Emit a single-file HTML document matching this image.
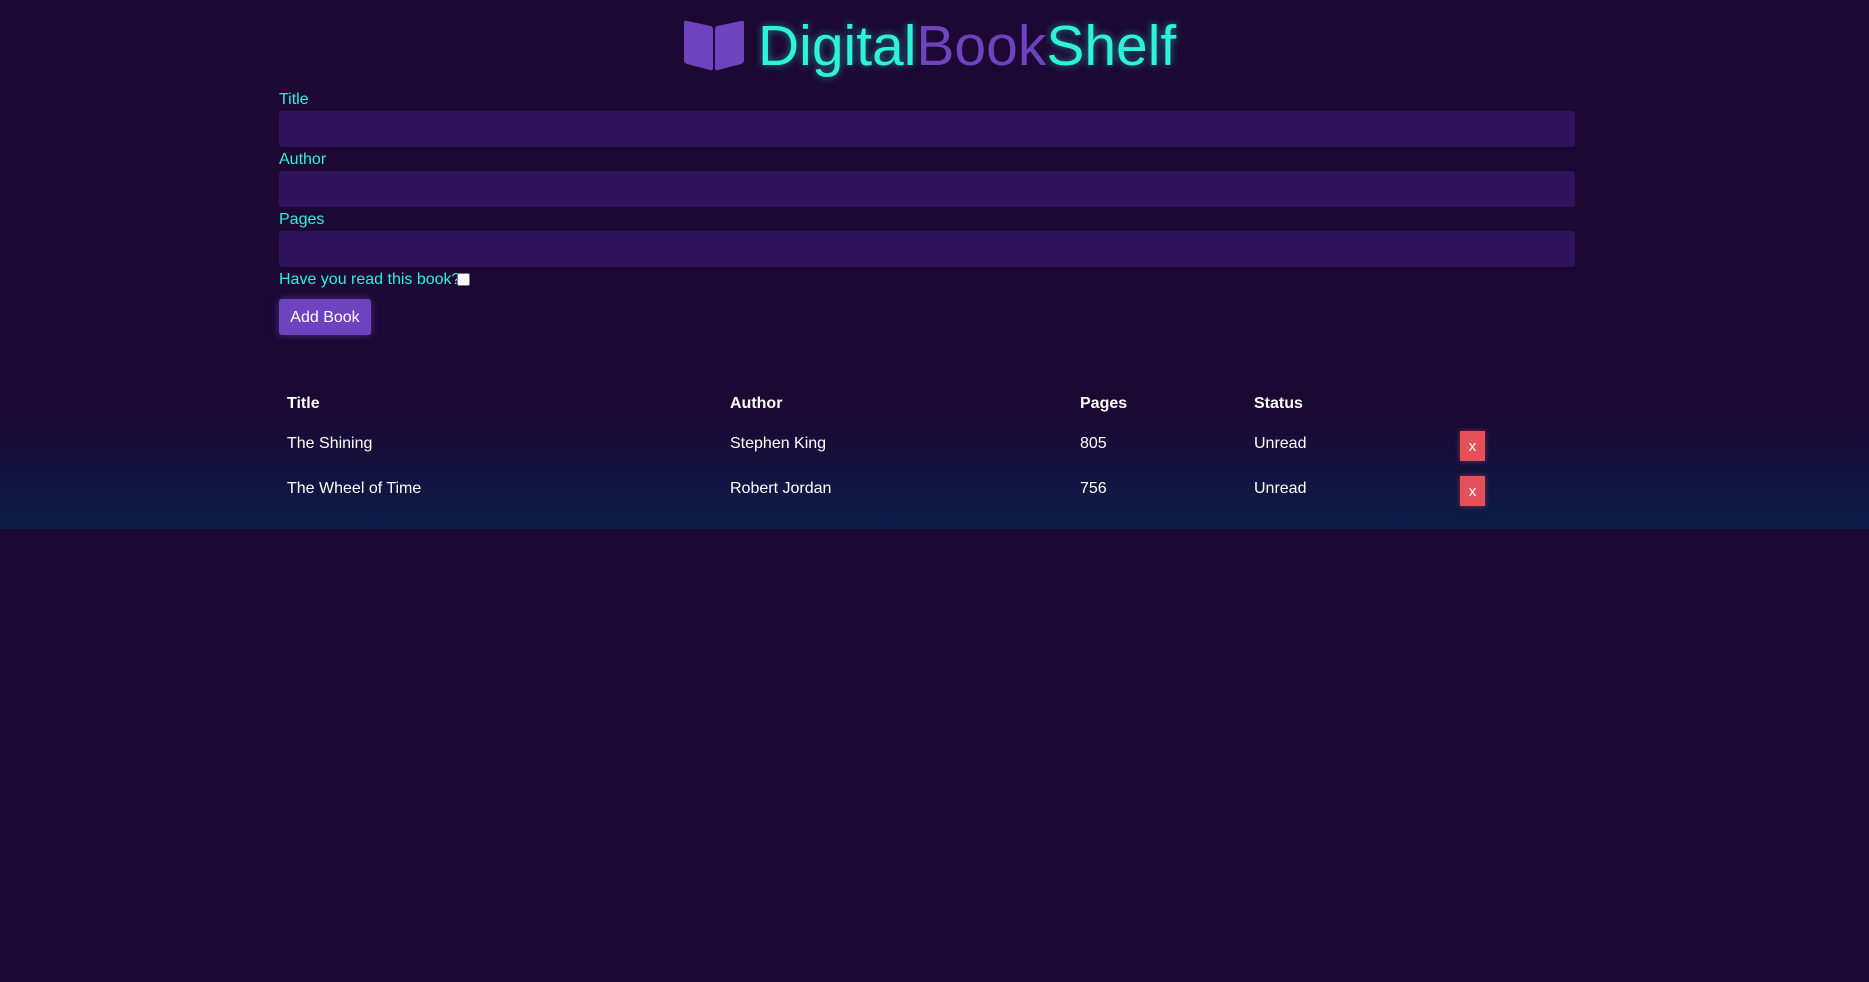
<!DOCTYPE html>
<html><head><meta charset="utf-8"><style>
html,body{margin:0;padding:0;width:1869px;height:982px;background:#1a0934;overflow:hidden;font-family:"Liberation Sans",sans-serif}
.top{position:absolute;left:0;top:0;width:1869px;height:529px;background:linear-gradient(to bottom,#1b0933 0px,#1b0933 415px,#0c1d4a 529px)}
.logo{position:absolute;left:682px;top:16px;height:60px;display:flex;align-items:center}
.logo span.t{font-size:57px;color:#2ef2da;text-shadow:0 0 8px rgba(46,242,218,.5);letter-spacing:0px}
.logo span.p{color:#6f43c0;text-shadow:none}
label{position:absolute;left:279px;color:#2ef2da;font-size:16px}
.inp{position:absolute;left:279px;width:1296px;height:36px;background:#30135d;border-radius:3px}
.btn{position:absolute;left:279px;top:299px;width:92px;height:36px;background:#6f43c0;border-radius:3px;color:#fff;font-size:16px;line-height:38px;text-align:center;box-shadow:0 0 8px rgba(111,67,192,.6)}
.cb{position:absolute;left:457px;top:273px;width:11px;height:11px;background:#fff;border:1px solid #777;border-radius:2px}
.c{position:absolute;color:#fff;font-size:16px}
.h{font-weight:bold}
.x{position:absolute;left:1460px;width:25px;height:30px;background:#e5515b;color:#fff;font-size:15px;text-align:center;line-height:31px;box-shadow:0 0 5px rgba(229,81,91,.5)}
</style></head><body>
<div class="top"></div>
<div class="logo">
<svg width="64" height="52" viewBox="0 0 64 52"><path d="M2 3 Q2 0 5 1 L29 6 Q31 7 31 9 L31 48 Q31 51 28 50 L5 44 Q2 43 2 40Z M33 9 Q33 7 35 6 L59 1 Q62 0 62 3 L62 40 Q62 43 59 44 L36 50 Q33 51 33 48Z" fill="#6f43c0"/></svg>
<span class="t" style="margin-left:12px">Digital<span class="p">Book</span>Shelf</span>
</div>
<label style="top:91px">Title</label>
<div class="inp" style="top:111px"></div>
<label style="top:151px">Author</label>
<div class="inp" style="top:171px"></div>
<label style="top:211px">Pages</label>
<div class="inp" style="top:231px"></div>
<label style="top:271px">Have you read this book?</label>
<div class="cb"></div>
<div class="btn">Add Book</div>
<div class="c h" style="left:287px;top:395px">Title</div>
<div class="c h" style="left:730px;top:395px">Author</div>
<div class="c h" style="left:1080px;top:395px">Pages</div>
<div class="c h" style="left:1254px;top:395px">Status</div>
<div class="c" style="left:287px;top:435px">The Shining</div>
<div class="c" style="left:730px;top:435px">Stephen King</div>
<div class="c" style="left:1080px;top:435px">805</div>
<div class="c" style="left:1254px;top:435px">Unread</div>
<div class="x" style="top:431px">x</div>
<div class="c" style="left:287px;top:480px">The Wheel of Time</div>
<div class="c" style="left:730px;top:480px">Robert Jordan</div>
<div class="c" style="left:1080px;top:480px">756</div>
<div class="c" style="left:1254px;top:480px">Unread</div>
<div class="x" style="top:476px">x</div>
</body></html>
